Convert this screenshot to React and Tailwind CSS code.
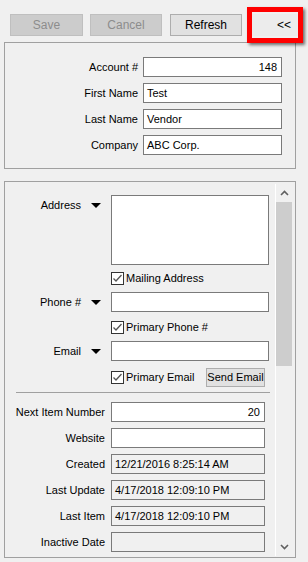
import React from "react";

const font = { fontFamily: '"Liberation Sans", Arial, sans-serif' };

const Caret = () => (
  <span className="ml-[10px] mr-[4px] w-0 h-0 border-l-[5px] border-r-[5px] border-t-[5px] border-l-transparent border-r-transparent border-t-black" />
);

const Check = ({ label }) => (
  <div className="flex items-center h-[13px]">
    <span className="w-[13px] h-[13px] border border-[#333] bg-white flex items-center justify-center">
      <svg width="11" height="11" viewBox="0 0 11 11">
        <polyline points="1.5,5.5 4,8 9.5,2" fill="none" stroke="#555" strokeWidth="1.3" />
      </svg>
    </span>
    <span className="ml-[2px] text-[11px] text-black leading-none">{label}</span>
  </div>
);

const Field = ({ value = "", right, disabled, w = "w-[154px]" }) => (
  <div
    className={`${w} h-[20px] border border-[#7a7a7a] flex items-center text-[11px] text-black ${
      disabled ? "bg-[#f0f0f0]" : "bg-white"
    } ${right ? "justify-end pr-[4px]" : "pl-[3px]"}`}
  >
    {value}
  </div>
);

const topFields = [
  { label: "Account #", value: "148", right: true },
  { label: "First Name", value: "Test" },
  { label: "Last Name", value: "Vendor" },
  { label: "Company", value: "ABC Corp." },
];

const lowerFields = [
  { label: "Next Item Number", value: "20", right: true },
  { label: "Website", value: "" },
  { label: "Created", value: "12/21/2016 8:25:14 AM", disabled: true },
  { label: "Last Update", value: "4/17/2018 12:09:10 PM", disabled: true },
  { label: "Last Item", value: "4/17/2018 12:09:10 PM", disabled: true },
  { label: "Inactive Date", value: "", disabled: true },
];

export default function App() {
  return (
    <div className="relative w-[308px] h-[562px] bg-[#f0f0f0] overflow-hidden" style={font}>
      {/* toolbar */}
      <div className="flex pt-[14px] pl-[10px] h-[36px]">
        <button className="w-[73px] h-[22px] bg-[#cccccc] border border-[#bfbfbf] text-[#8c8c8c] text-[12px]">
          Save
        </button>
        <button className="ml-[7px] w-[72px] h-[22px] bg-[#cccccc] border border-[#bfbfbf] text-[#8c8c8c] text-[12px]">
          Cancel
        </button>
        <button className="ml-[8px] w-[72px] h-[22px] bg-[#e1e1e1] border border-[#adadad] text-black text-[12px]">
          Refresh
        </button>
        <button className="ml-[8px] w-[48px] h-[22px] bg-[#ececec] text-black text-[12px] text-right pr-[7px]">
          &lt;&lt;
        </button>
      </div>

      {/* red highlight frame */}
      <div className="absolute left-[247px] top-[7px] w-[56px] h-[36px] border-[5px] border-[#ff0000] shadow-[2px_2px_3px_rgba(0,0,0,0.55)]" />

      {/* header panel */}
      <div className="mt-[6px] mx-[4px] w-[292px] h-[127px] border border-[#a0a0a0] pt-[14px] flex flex-col gap-[6px]">
        {topFields.map((f) => (
          <div key={f.label} className="flex items-center">
            <div className="w-[133px] text-right text-[11px] text-black">{f.label}</div>
            <div className="ml-[5px]">
              <Field value={f.value} right={f.right} w="w-[139px]" />
            </div>
          </div>
        ))}
      </div>

      {/* detail panel */}
      <div className="mt-[12px] mx-[4px] w-[292px] h-[377px] border border-[#a0a0a0] flex overflow-hidden">
        <div className="w-[270px] pt-[13px] flex flex-col">
          <div className="flex">
            <div className="w-[100px] h-[20px] flex items-center justify-end text-[11px] text-black">
              Address <Caret />
            </div>
            <div className="ml-[6px] w-[158px] h-[70px] bg-white border border-[#7a7a7a]" />
          </div>
          <div className="mt-[7px] ml-[106px]">
            <Check label="Mailing Address" />
          </div>
          <div className="mt-[7px] flex">
            <div className="w-[100px] h-[20px] flex items-center justify-end text-[11px] text-black">
              Phone # <Caret />
            </div>
            <div className="ml-[6px]">
              <Field w="w-[158px]" />
            </div>
          </div>
          <div className="mt-[9px] ml-[106px]">
            <Check label="Primary Phone #" />
          </div>
          <div className="mt-[7px] flex">
            <div className="w-[100px] h-[20px] flex items-center justify-end text-[11px] text-black">
              Email <Caret />
            </div>
            <div className="ml-[6px]">
              <Field w="w-[158px]" />
            </div>
          </div>
          <div className="mt-[7px] ml-[106px] flex items-center h-[19px]">
            <div className="w-[95px]">
              <Check label="Primary Email" />
            </div>
            <button className="w-[59px] h-[19px] bg-[#e1e1e1] border border-[#adadad] text-[11px] text-black">
              Send Email
            </button>
          </div>
          <div className="mt-[5px] ml-[11px] w-[254px] h-px bg-[#a0a0a0]" />
          <div className="mt-[9px] flex flex-col gap-[6px]">
            {lowerFields.map((f) => (
              <div key={f.label} className="flex items-center">
                <div className="w-[100px] text-right text-[11px] text-black">{f.label}</div>
                <div className="ml-[6px]">
                  <Field value={f.value} right={f.right} disabled={f.disabled} />
                </div>
              </div>
            ))}
          </div>
        </div>

        {/* scrollbar */}
        <div className="mt-[2px] h-[372px] w-[17px] border-l border-white bg-[#f0f0f0] flex flex-col items-center">
          <div className="h-[18px] w-full flex items-center justify-center">
            <svg width="9" height="6" viewBox="0 0 9 6">
              <polyline points="1,5 4.5,1.5 8,5" fill="none" stroke="#606060" strokeWidth="1.6" />
            </svg>
          </div>
          <div className="w-full h-[164px] bg-[#cdcdcd]" />
          <div className="flex-1" />
          <div className="h-[18px] w-full flex items-center justify-center">
            <svg width="9" height="6" viewBox="0 0 9 6">
              <polyline points="1,1 4.5,4.5 8,1" fill="none" stroke="#606060" strokeWidth="1.6" />
            </svg>
          </div>
        </div>
      </div>
    </div>
  );
}
